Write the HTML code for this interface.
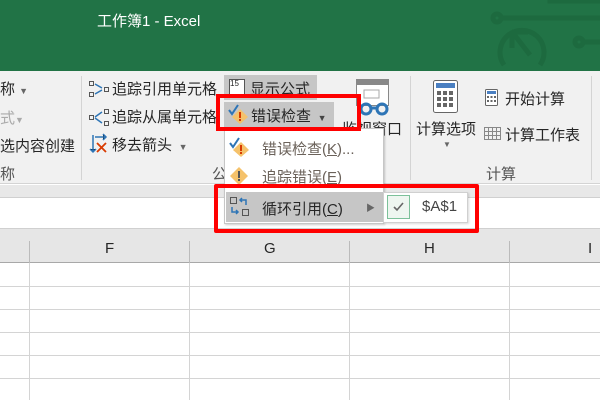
<!DOCTYPE html>
<html><head><meta charset="utf-8"><style>
*{margin:0;padding:0;box-sizing:border-box}
body{width:600px;height:400px;overflow:hidden;position:relative;background:#fff;font-family:"Liberation Sans","Noto Sans CJK SC",sans-serif;font-size:15px;color:#262626}
.a{position:absolute;white-space:nowrap}
.g{color:#555}
</style></head><body>
<!-- title -->
<div class="a" style="left:0;top:0;width:600px;height:71px;background:#217346"></div>
<svg class="a" style="left:400px;top:0" width="200" height="71">
<g stroke="#1d6a3f" stroke-width="5" fill="none">
<rect x="150" y="-5" width="60" height="6" fill="#1d6a3f"/>
<circle cx="97" cy="18" r="4"/><line x1="101" y1="18" x2="200" y2="18"/>
<circle cx="179" cy="42" r="4"/><line x1="183" y1="42" x2="200" y2="42"/>
<path d="M104 65 A22 22 0 1 1 140 65"/>
<path d="M112 32 L112 48 M112 32 L128 32 M113 33 L130 55"/>
</g></svg>
<div class="a" style="left:97px;top:10px;color:#fff;font-size:15px">工作簿1 - Excel</div>
<!-- ribbon -->
<div class="a" style="left:0;top:71px;width:600px;height:113px;background:#f1f1f1;border-bottom:1px solid #d4d4d4"></div>
<div class="a" style="left:0;top:185px;width:600px;height:12px;background:#e8e8e8"></div>
<div class="a" style="left:0;top:197px;width:600px;height:32px;background:#fff;border-top:1px solid #d0d0d0;border-bottom:1px solid #d0d0d0"></div>
<div class="a" style="left:81px;top:76px;width:1px;height:104px;background:#d4d4d4"></div>
<div class="a" style="left:410px;top:76px;width:1px;height:104px;background:#d4d4d4"></div>
<div class="a" style="left:591px;top:76px;width:1px;height:104px;background:#d4d4d4"></div>
<div class="a" style="left:0;top:78px">称 <span style="font-size:9px;color:#666">▼</span></div>
<div class="a" style="left:0;top:107px;color:#aaa">式<span style="font-size:9px">▼</span></div>
<div class="a" style="left:0;top:135px">选内容创建</div>
<div class="a g" style="left:0;top:163px">称</div>
<!-- group 2 -->
<svg class="a" style="left:88px;top:80px" width="22" height="80">
<g fill="none" stroke="#555" stroke-width="1"><rect x="1.5" y="1.5" width="4" height="4"/><rect x="1.5" y="12.5" width="4" height="4"/><rect x="16.5" y="7.5" width="4" height="4"/>
<rect x="1.5" y="35.5" width="4" height="4"/><rect x="16.5" y="29.5" width="4" height="4"/><rect x="16.5" y="41.5" width="4" height="4"/></g>
<g stroke="#2e75b6" stroke-width="1.5"><path d="M7 4 L14 8 M7 14 L14 10 M7 37 L14 32 M7 38 L14 43"/><path d="M5 55 L5 72 M2 69 L5 72 L8 69 M7 57 L18 57 M15 54 L18 57 L15 60"/></g>
<path d="M9 63 L18 72 M18 63 L9 72" stroke="#d83b01" stroke-width="1.8"/>
</svg>
<div class="a" style="left:112px;top:78px">追踪引用单元格</div>
<div class="a" style="left:112px;top:106px">追踪从属单元格</div>
<div class="a" style="left:112px;top:134px">移去箭头 <span style="font-size:9px;color:#666">&nbsp;▼</span></div>
<div class="a g" style="left:212px;top:163px">公</div>
<div class="a" style="left:224px;top:75px;width:93px;height:25px;background:#c6c6c6"></div>
<div class="a" style="left:229px;top:79px;width:16px;height:16px;border:1px solid #555;font-size:8px;line-height:8px;background:#fff">15</div>
<div class="a" style="left:250px;top:78px">显示公式</div>
<div class="a" style="left:224px;top:102px;width:110px;height:25px;background:#c6c6c6"></div>
<svg class="a" style="left:228px;top:104px" width="22" height="20"><path d="M1 6 L4 10 L10 1" stroke="#2e75b6" stroke-width="2" fill="none"/><path d="M12 5 L20 13 L12 20 L4 13Z" fill="#f5c26b"/><rect x="11" y="8" width="2" height="6" fill="#d83b01"/><rect x="11" y="15" width="2" height="2" fill="#d83b01"/></svg>
<div class="a" style="left:251px;top:105px">错误检查 <span style="font-size:9px;color:#444">&nbsp;▼</span></div>
<!-- watch window -->
<svg class="a" style="left:354px;top:78px" width="40" height="40"><rect x="2.5" y="1.5" width="32" height="26" fill="#fff" stroke="#888"/><rect x="3" y="2" width="31" height="5" fill="#888"/><rect x="10" y="12" width="15" height="8" fill="none" stroke="#aaa"/>
<g fill="none" stroke="#2e75b6" stroke-width="3"><circle cx="12" cy="31" r="5"/><circle cx="28" cy="31" r="5"/><path d="M17 30 L23 30"/></g></svg>
<div class="a" style="left:342px;top:118px">监视窗口</div>
<!-- calc -->
<svg class="a" style="left:432px;top:79px" width="28" height="36"><rect x="1.5" y="1.5" width="24" height="32" rx="2" fill="#fff" stroke="#666"/><rect x="4" y="4" width="19" height="5" fill="#4a7fc1"/>
<g fill="#666"><rect x="5" y="12" width="4" height="4"/><rect x="11" y="12" width="4" height="4"/><rect x="17" y="12" width="4" height="4"/><rect x="5" y="18" width="4" height="4"/><rect x="11" y="18" width="4" height="4"/><rect x="17" y="18" width="4" height="4"/><rect x="5" y="24" width="4" height="4"/><rect x="11" y="24" width="4" height="4"/><rect x="17" y="24" width="4" height="4"/></g></svg>
<div class="a" style="left:416px;top:118px">计算选项</div>
<div class="a" style="left:443px;top:140px;font-size:8px;color:#666">▼</div>
<svg class="a" style="left:484px;top:88px" width="16" height="20"><rect x="1.5" y="1.5" width="12" height="16" rx="1" fill="#fff" stroke="#666"/><rect x="3" y="3" width="9" height="3" fill="#4a7fc1"/><g fill="#666"><rect x="3" y="8" width="2" height="2"/><rect x="6.5" y="8" width="2" height="2"/><rect x="10" y="8" width="2" height="2"/><rect x="3" y="12" width="2" height="2"/><rect x="6.5" y="12" width="2" height="2"/><rect x="10" y="12" width="2" height="2"/></g></svg>
<div class="a" style="left:505px;top:88px">开始计算</div>
<svg class="a" style="left:483px;top:125px" width="20" height="18"><g fill="none" stroke="#888"><rect x="1.5" y="2.5" width="16" height="12"/><path d="M1.5 6.5H17.5M1.5 10.5H17.5M5.5 2.5V14.5M9.5 2.5V14.5M13.5 2.5V14.5"/></g></svg>
<div class="a" style="left:505px;top:124px">计算工作表</div>
<div class="a g" style="left:486px;top:163px">计算</div>
<!-- grid -->
<div class="a" style="left:0;top:229px;width:600px;height:34px;background:#e6e6e6;border-bottom:1px solid #a8a8a8"></div>
<div class="a" style="left:105px;top:240px;font-size:15px">F</div>
<div class="a" style="left:264px;top:240px;font-size:15px">G</div>
<div class="a" style="left:424px;top:240px;font-size:15px">H</div>
<div class="a" style="left:588px;top:240px;font-size:15px">I</div>
<svg class="a" style="left:0;top:241px" width="600" height="159"><g stroke="#d4d4d4" stroke-width="1">
<path d="M29.5 0V159M189.5 0V159M349.5 0V159M509.5 0V159"/>
<path d="M0 45.5H600M0 68.5H600M0 91.5H600M0 114.5H600M0 137.5H600"/></g>
<g stroke="#bbb"><path d="M29.5 0V22M189.5 0V22M349.5 0V22M509.5 0V22"/></g></svg>
<!-- menu -->
<div class="a" style="left:224px;top:128px;width:160px;height:96px;background:#fff;border:1px solid #c6c6c6;box-shadow:1px 1px 2px rgba(0,0,0,.2)"></div>
<svg class="a" style="left:229px;top:137px" width="22" height="20"><path d="M1 6 L4 10 L10 1" stroke="#2e75b6" stroke-width="2" fill="none"/><path d="M12 5 L20 13 L12 20 L4 13Z" fill="#f5c26b"/><rect x="11" y="8" width="2" height="6" fill="#d83b01"/><rect x="11" y="15" width="2" height="2" fill="#d83b01"/></svg>
<div class="a" style="left:262px;top:138px;color:#6b625a">错误检查(<u>K</u>)...</div>
<svg class="a" style="left:229px;top:166px" width="22" height="20"><path d="M10 1 L19 10 L10 19 L1 10Z" fill="#f5c26b"/><rect x="9" y="5" width="2" height="7" fill="#555"/><rect x="9" y="13" width="2" height="2" fill="#555"/></svg>
<div class="a" style="left:262px;top:166px;color:#6b625a">追踪错误(<u>E</u>)</div>
<div class="a" style="left:226px;top:192px;width:157px;height:30px;background:#c6c6c6"></div>
<svg class="a" style="left:229px;top:196px" width="22" height="22"><g fill="none" stroke="#555"><rect x="1.5" y="1.5" width="6" height="6"/><rect x="13.5" y="13.5" width="6" height="6"/></g><g fill="none" stroke="#2e75b6" stroke-width="1.5"><path d="M17 9 V4 H11 M13 2 L11 4 L13 6"/><path d="M3 11 V16 H9 M7 14 L9 16 L7 18"/></g></svg>
<div class="a" style="left:262px;top:198px">循环引用(<u>C</u>)</div>
<div class="a" style="left:366px;top:201px;font-size:9px;color:#666">▶</div>
<div class="a" style="left:383px;top:192px;width:85px;height:31px;background:#fff;border:1px solid #d0d0d0;box-shadow:1px 1px 2px rgba(0,0,0,.15)"></div>
<div class="a" style="left:387px;top:195px;width:23px;height:24px;background:#eef6f0;border:1px solid #7cc19a"></div>
<svg class="a" style="left:392px;top:201px" width="14" height="12"><path d="M2 6 L5 9 L11 2" stroke="#666" stroke-width="1.6" fill="none"/></svg>
<div class="a" style="left:422px;top:198px;font-size:15px;color:#444">$A$1</div>
<!-- red boxes -->
<div class="a" style="left:216px;top:94px;width:145px;height:37px;border:4px solid #ff0000"></div>
<div class="a" style="left:214px;top:184px;width:265px;height:49px;border:4px solid #ff0000;border-radius:2px"></div>
</body></html>
